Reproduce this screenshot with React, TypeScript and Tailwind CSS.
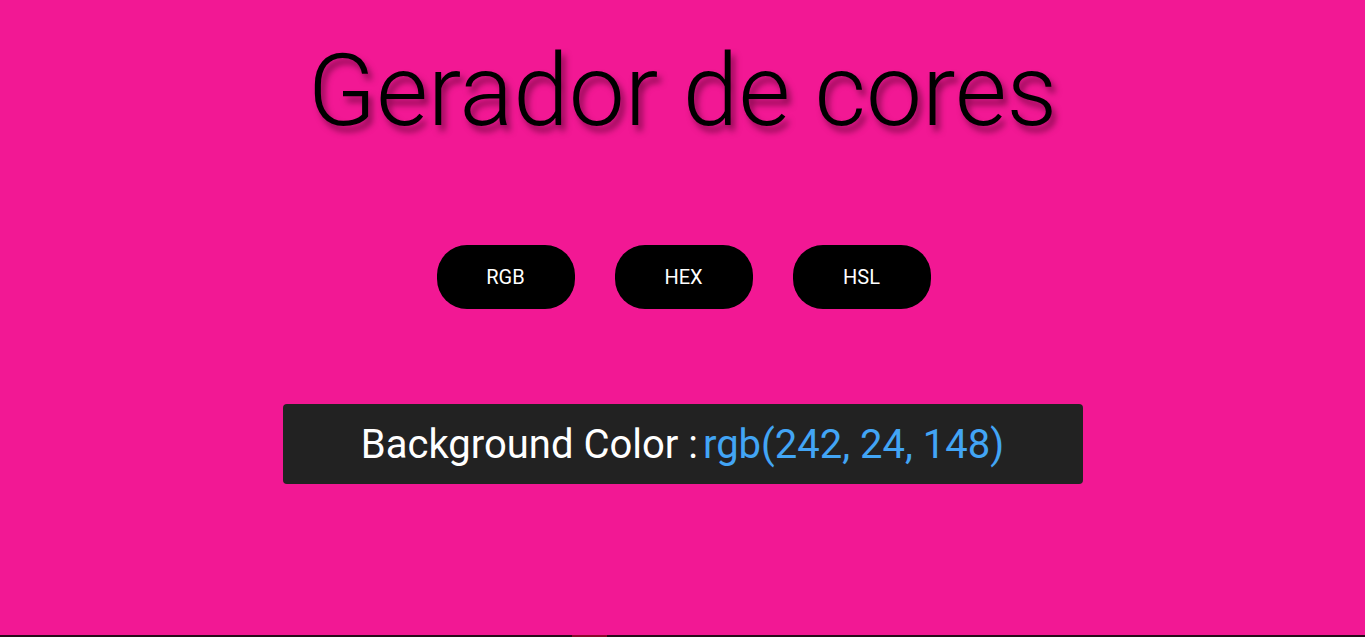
import React, { useState } from 'react'

const formats = ['RGB', 'HEX', 'HSL'] as const

const App: React.FC = () => {
  const [color] = useState('rgb(242, 24, 148)')

  return (
    <div className="h-[637px] flex flex-col overflow-hidden font-['Roboto',sans-serif]">
      <div className="flex-1 bg-[#f21894] flex flex-col items-center">
        {/* Title */}
        <h1 className="mt-[32px] text-[100px] leading-[117px] font-light text-black [text-shadow:4px_6px_6px_rgba(60,0,30,0.55)]">
          Gerador de cores
        </h1>

        {/* Format buttons */}
        <div className="mt-[96px] ml-[2px] flex gap-[40px]">
          {formats.map((f) => (
            <button
              key={f}
              className="w-[138px] h-[64px] rounded-[30px] bg-black text-white text-[20px]"
            >
              {f}
            </button>
          ))}
        </div>

        {/* Current color */}
        <div className="mt-[95px] w-[800px] h-[80px] bg-[#222222] rounded-[4px] flex items-center justify-center text-[40px] pt-[1px]">
          <span className="text-white">Background Color :</span>
          <span className="ml-[5px] text-[#42a5f5]">{color}</span>
        </div>
      </div>
      <div className="h-[2px] bg-[#2a0b1b] flex">
        <div className="ml-[572px] w-[35px] bg-[#8a0a2c]" />
      </div>
    </div>
  )
}

export default App
